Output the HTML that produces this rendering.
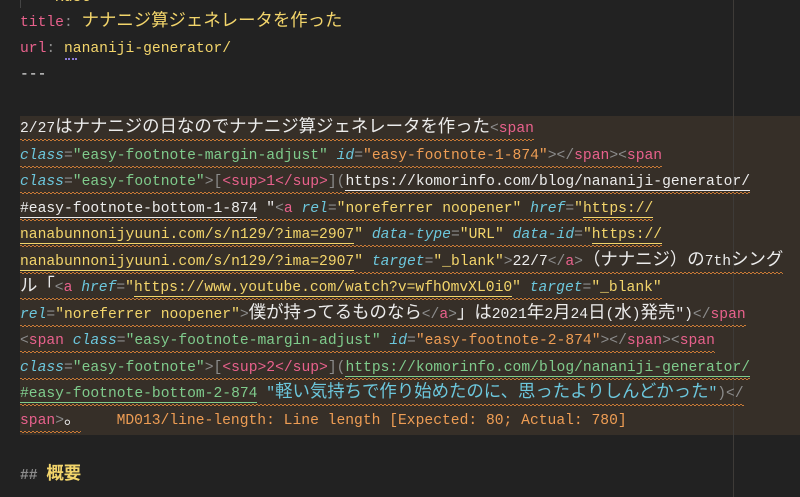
<!DOCTYPE html>
<html><head><meta charset="utf-8">
<style>
html,body{margin:0;padding:0;}
body{width:800px;height:497px;background:#222222;overflow:hidden;position:relative;
font-family:"Liberation Mono","Noto Sans CJK JP",monospace;font-size:14.67px;color:#e6e6e6;}
.hl{position:absolute;left:20px;top:116px;width:780px;height:319px;background:#362f28;}
.rule{position:absolute;left:733px;top:0;width:1px;height:497px;background:#3e3b38;}
.guide{position:absolute;left:20px;top:0;width:1px;height:8px;background:#444;}
.l{position:absolute;left:20px;height:26px;line-height:26px;white-space:pre;}
.wv{display:inline-block;position:relative;height:26px;}
.wv::after{content:"";position:absolute;left:0;right:0;bottom:1px;height:2px;
background:repeating-linear-gradient(90deg,#c97a36 0 2px,transparent 2px 4px) 0 0/100% 1px no-repeat,
repeating-linear-gradient(90deg,transparent 0 2px,#c97a36 2px 4px) 0 1px/100% 1px no-repeat;}
.j{font-family:"Noto Sans CJK JP",sans-serif;font-size:17.4px;line-height:1;}
.p{color:#e8618c}.c{color:#6cc7dd;font-style:italic}.g{color:#7fcb8c}.y{color:#f3d56b}
.o{color:#ee9d54}.w{color:#ececec}.m{color:#8c8c8c}.cy{color:#6cc7dd}
.u{border-bottom:1px solid currentColor;}
</style></head><body>
<div class="hl"></div>
<div class="rule"></div>
<div class="guide"></div>
<div class="l y" style="top:-15px;left:55px">Rust</div>
<div class="l" style="top:10px"><span class="p">title</span><span class="m">:</span> <span class="y j">ナナニジ算ジェネレータを作った</span></div>
<div class="l" style="top:36px"><span class="p">url</span><span class="m">:</span> <span class="y">nananiji-generator/</span></div>
<div style="position:absolute;left:65px;top:58px;width:12px;border-top:2px dotted #8a7bd8"></div>
<div class="l w" style="top:62px">---</div>

<div class="l" style="top:116px"><span class="wv"><span class="w">2/27</span><span class="w j">はナナニジの日なのでナナニジ算ジェネレータを作った</span><span class="m">&lt;</span><span class="p">span</span></span></div>
<div class="l" style="top:142.5px"><span class="wv"><span class="c">class</span><span class="m">=</span><span class="g">"easy-footnote-margin-adjust"</span> <span class="c">id</span><span class="m">=</span><span class="o">"easy-footnote-1-874"</span><span class="m">&gt;&lt;/</span><span class="p">span</span><span class="m">&gt;&lt;</span><span class="p">span</span></span></div>
<div class="l" style="top:169px"><span class="wv"><span class="c">class</span><span class="m">=</span><span class="g">"easy-footnote"</span><span class="m">&gt;[</span><span class="p">&lt;sup&gt;1&lt;/sup&gt;</span><span class="m">](</span><span class="w u">https://komorinfo.com/blog/nananiji-generator/</span></span></div>
<div class="l" style="top:195.5px"><span class="wv"><span class="w u">#easy-footnote-bottom-1-874</span> <span class="w">"</span><span class="m">&lt;</span><span class="p">a</span> <span class="c">rel</span><span class="m">=</span><span class="y">"noreferrer noopener"</span> <span class="c">href</span><span class="m">=</span><span class="y">"</span><span class="y u">https://</span></span></div>
<div class="l" style="top:222px"><span class="wv"><span class="y u">nanabunnonijyuuni.com/s/n129/?ima=2907</span><span class="y">"</span> <span class="c">data-type</span><span class="m">=</span><span class="y">"URL"</span> <span class="c">data-id</span><span class="m">=</span><span class="y">"</span><span class="y u">https://</span></span></div>
<div class="l" style="top:248.5px"><span class="wv"><span class="y u">nanabunnonijyuuni.com/s/n129/?ima=2907</span><span class="y">"</span> <span class="c">target</span><span class="m">=</span><span class="y">"_blank"</span><span class="m">&gt;</span><span class="w">22/7</span><span class="m">&lt;/</span><span class="p">a</span><span class="m">&gt;</span><span class="w j">（ナナニジ）の</span><span class="w">7th</span><span class="w j">シング</span></span></div>
<div class="l" style="top:275px"><span class="wv"><span class="w j">ル「</span><span class="m">&lt;</span><span class="p">a</span> <span class="c">href</span><span class="m">=</span><span class="y">"</span><span class="y u">https://www.youtube.com/watch?v=wfhOmvXL0i0</span><span class="y">"</span> <span class="c">target</span><span class="m">=</span><span class="y">"_blank"</span></span></div>
<div class="l" style="top:301.5px"><span class="wv"><span class="c">rel</span><span class="m">=</span><span class="y">"noreferrer noopener"</span><span class="m">&gt;</span><span class="w j">僕が持ってるものなら</span><span class="m">&lt;/</span><span class="p">a</span><span class="m">&gt;</span><span class="w j">」は</span><span class="w">2021</span><span class="w j">年</span><span class="w">2</span><span class="w j">月</span><span class="w">24</span><span class="w j">日</span><span class="w">(</span><span class="w j">水</span><span class="w">)</span><span class="w j">発売</span><span class="w">")</span><span class="m">&lt;/</span><span class="p">span</span></span></div>
<div class="l" style="top:328px"><span class="wv"><span class="m">&lt;</span><span class="p">span</span> <span class="c">class</span><span class="m">=</span><span class="g">"easy-footnote-margin-adjust"</span> <span class="c">id</span><span class="m">=</span><span class="o">"easy-footnote-2-874"</span><span class="m">&gt;&lt;/</span><span class="p">span</span><span class="m">&gt;&lt;</span><span class="p">span</span></span></div>
<div class="l" style="top:354.5px"><span class="wv"><span class="c">class</span><span class="m">=</span><span class="g">"easy-footnote"</span><span class="m">&gt;[</span><span class="p">&lt;sup&gt;2&lt;/sup&gt;</span><span class="m">](</span><span class="g u">https://komorinfo.com/blog/nananiji-generator/</span></span></div>
<div class="l" style="top:381px"><span class="wv"><span class="g u">#easy-footnote-bottom-2-874</span> <span class="cy">"</span><span class="cy j">軽い気持ちで作り始めたのに、思ったよりしんどかった</span><span class="cy">"</span><span class="m">)&lt;/</span></span></div>
<div class="l" style="top:407.5px"><span class="wv"><span class="p">span</span><span class="m">&gt;</span><span class="w j">。</span></span><span class="o">    MD013/line-length: Line length [Expected: 80; Actual: 780]</span></div>

<div class="l" style="top:463px"><span class="m" style="font-weight:bold">##</span> <span class="y j" style="font-weight:bold">概要</span></div>
</body></html>
